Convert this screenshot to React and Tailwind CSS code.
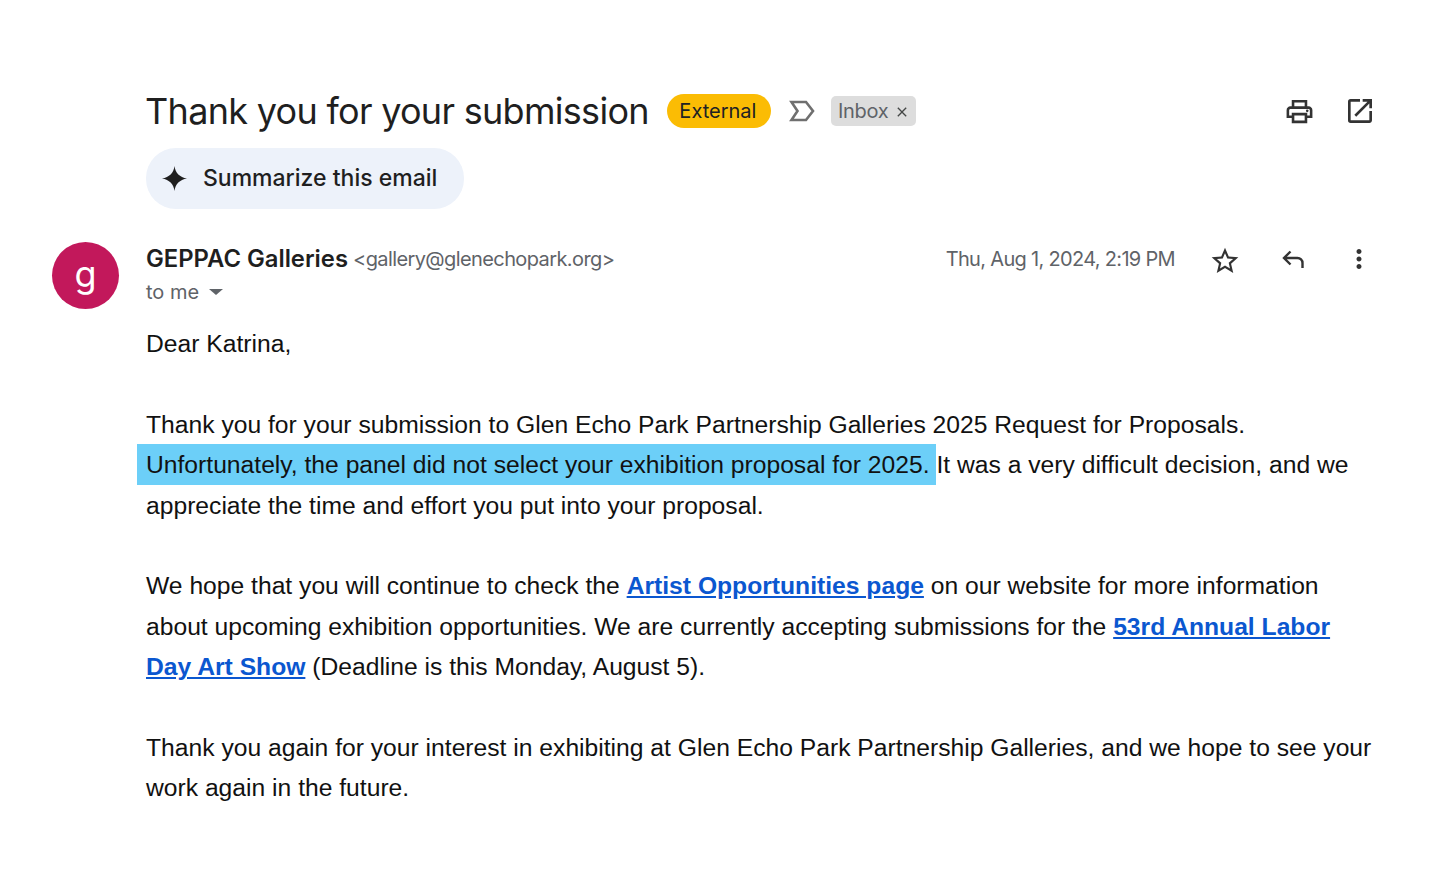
import React from 'react';
import { MdOutlinePrint, MdOpenInNew, MdStarBorder, MdMoreVert, MdClose } from 'react-icons/md';

function EmailLink({ children }) {
  return <a className="font-bold text-[#0b57d0] underline">{children}</a>;
}

export default function App() {
  return (
    <div className="min-h-[895px] w-[1456px] bg-white font-['Liberation_Sans',Arial,sans-serif] text-[#202124]">
      <div className="flex pl-[52px] pr-[83px] pt-[88px]">
        <div className="w-[94px] shrink-0" />
        <div className="flex-1">
          {/* Subject */}
          <div className="flex h-[46px] items-center">
            <h1 className="-ml-px text-[36px] font-normal tracking-[-0.7px] text-[#1f1f1f] font-['Inter',sans-serif]">Thank you for your submission</h1>
            <span className="ml-[18px] flex h-[34px] w-[104px] items-center justify-center rounded-full bg-[#fbbc04] pr-[2px] text-[20px] text-[#202124] font-['Inter',sans-serif]">External</span>
            <svg className="ml-[18px]" width="26" height="22" viewBox="0 0 26 22" fill="none" stroke="#6f6f6f" strokeWidth="2.6">
              <path d="M2.5 2h14.5l7 9-7 9H2.5l6-9z" />
            </svg>
            <span className="ml-[16px] flex h-[30px] w-[85px] items-center gap-[6px] rounded-[5px] bg-[#dddddd] pl-[7px] text-[20px] tracking-[-0.3px] text-[#5f6368] font-['Inter',sans-serif]">
              Inbox <MdClose size={16} className="mt-[2px] text-[#444746]" />
            </span>
            <div className="-mr-[3px] ml-auto flex items-center gap-[29px]">
              <MdOutlinePrint size={31} className="text-[#333333]" />
              <MdOpenInNew size={32} className="text-[#333333]" />
            </div>
          </div>
          {/* Summarize */}
          <div className="mt-[14px] flex h-[61px] w-[318px] items-center gap-[16px] rounded-[30px] bg-[#edf2fa] pl-[16px]">
            <svg width="25" height="25" viewBox="0 0 24 24" fill="#1f1f1f"><path d="M12 0C12.8 6.5 17 11 24 12 17 13 12.8 17.5 12 24 11.2 17.5 7 13 0 12 7 11 11.2 6.5 12 0z" /></svg>
            <span className="text-[23px] font-medium text-[#1f1f1f] font-['Inter',sans-serif]">Summarize this email</span>
          </div>
        </div>
      </div>

      <div className="mt-[33px] flex pl-[52px] pr-[83px]">
        <div className="flex h-[67px] w-[67px] shrink-0 items-center justify-center rounded-full bg-[#c2185b] pb-[3px] text-[36px] text-white font-['Inter',sans-serif]">g</div>
        <div className="ml-[27px] flex-1">
          <div className="flex items-start justify-between">
            <div>
              <div className="flex h-[33px] items-center gap-[5px]">
                <span className="text-[23.8px] font-semibold text-[#1f1f1f] font-['Inter',sans-serif]">GEPPAC Galleries</span>
                <span className="text-[20px] tracking-[-0.6px] text-[#5f6368] font-['Inter',sans-serif]">&lt;gallery@glenechopark.org&gt;</span>
              </div>
              <div className="mt-[2px] flex items-center text-[20px] text-[#5f6368] font-['Inter',sans-serif]">
                to me
                <span className="ml-[10px] h-0 w-0 border-x-[7px] border-t-[6px] border-x-transparent border-t-[#5f6368]" />
              </div>
            </div>
            <div className="-mr-[1px] -mt-px flex items-center">
              <span className="text-[20px] tracking-[-0.68px] text-[#5f6368] font-['Inter',sans-serif]">Thu, Aug 1, 2024, 2:19 PM</span>
              <MdStarBorder size={32} className="ml-[34px] mt-[4px] text-[#333333]" />
              <svg className="ml-[40px]" width="24" height="24" viewBox="0 0 24 24" fill="none" stroke="#333333" strokeWidth="2.4">
                <path d="M9.5 4.5 3 11l6.5 6.5M3 11h13.5a5 5 0 0 1 5 5v5" />
              </svg>
              <MdMoreVert size={30} className="ml-[39px] text-[#333333]" />
            </div>
          </div>
        </div>
      </div>

      <div className="pl-[146px] pr-[83px] pt-[15px] text-[24.67px] leading-[40.4px] text-[#111111]">
        <p>Dear Katrina,</p>
        <br />
        <p>
          Thank you for your submission to Glen Echo Park Partnership Galleries 2025 Request for Proposals.{' '}
          <span className="-ml-[9px] bg-[#6ccff8] pb-[7px] pl-[9px] pt-[7px]">Unfortunately, the panel did not select your exhibition proposal for 2025.&nbsp;</span>
          It was a very difficult decision, and we appreciate the time and effort you put into your proposal.
        </p>
        <br />
        <p>
          We hope that you will continue to check the <EmailLink>Artist Opportunities page</EmailLink> on our website for more information about upcoming exhibition opportunities. We are currently accepting submissions for the <EmailLink>53rd Annual Labor Day Art Show</EmailLink> (Deadline is this Monday, August 5).
        </p>
        <br />
        <p>Thank you again for your interest in exhibiting at Glen Echo Park Partnership Galleries, and we hope to see your work again in the future.</p>
      </div>
    </div>
  );
}
